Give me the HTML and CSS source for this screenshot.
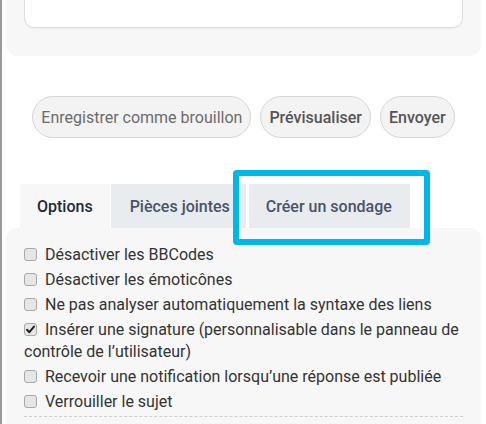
FILE: index.html
```html
<!DOCTYPE html>
<html lang="fr">
<head>
<meta charset="utf-8">
<link rel="stylesheet" href="styles.css">
</head>
<body>
<div class="page">
  <div class="editor-panel">
    <textarea class="message"></textarea>
  </div>

  <div class="actions">
    <button class="btn">Enregistrer comme brouillon</button>
    <button class="btn btn-strong">Prévisualiser</button>
    <button class="btn btn-strong">Envoyer</button>
  </div>

  <div class="tabs">
    <div class="tab tab-active">Options</div>
    <div class="tab">Pièces jointes</div>
    <div class="tab tab-poll">Créer un sondage
      <span class="highlight"></span>
    </div>
  </div>

  <div class="options-panel">
    <label class="opt"><span class="box"></span>Désactiver les BBCodes</label>
    <label class="opt"><span class="box"></span>Désactiver les émoticônes</label>
    <label class="opt"><span class="box"></span>Ne pas analyser automatiquement la syntaxe des liens</label>
    <label class="opt"><span class="box box-checked"><svg viewBox="0 0 13 13" width="13" height="13"><path d="M3 6.8 L5.4 9.2 L10 3.6" fill="none" stroke="#222" stroke-width="2" stroke-linecap="round" stroke-linejoin="round"/></svg></span>Insérer une signature (personnalisable dans le panneau de contrôle de l’utilisateur)</label>
    <label class="opt"><span class="box"></span>Recevoir une notification lorsqu’une réponse est publiée</label>
    <label class="opt"><span class="box"></span>Verrouiller le sujet</label>
    <div class="divider"></div>
  </div>
</div>
</body>
</html>
```

FILE: styles.css
```css
html, body {
  margin: 0;
  padding: 0;
  background: #ffffff;
  overflow: hidden;
}

body {
  font-family: Roboto, "Liberation Sans", Arial, sans-serif;
  color: #333;
}

.page {
  border-left: 2px solid #9a9a9a;
  min-height: 424px;
  padding-left: 4px;
  padding-right: 5px;
}

.editor-panel {
  background: #f7f7f7;
  border-radius: 0 0 11px 11px;
  padding: 0 18px 28px 18px;
  margin-top: -20px;
}

.message {
  display: block;
  box-sizing: border-box;
  width: 100%;
  height: 48px;
  background: #fff;
  border: 1px solid #dedede;
  border-radius: 10px;
  box-shadow: 0 1px 1px rgba(0,0,0,0.04);
  resize: none;
  outline: none;
}

.actions {
  display: flex;
  justify-content: center;
  gap: 9px;
  margin-top: 40px;
}

.btn {
  height: 42px;
  padding: 0 8px;
  font-family: Roboto, "Liberation Sans", Arial, sans-serif;
  font-size: 16px;
  color: #6b6b6b;
  background: #f3f3f3;
  border: 1px solid #d6d6d6;
  border-radius: 21px;
}

.btn-strong {
  font-weight: 500;
  color: #555;
}

.tabs {
  display: flex;
  margin-top: 46px;
  margin-left: 14px;
  height: 44px;
}

.tab {
  display: flex;
  align-items: center;
  padding: 0 16px 0 19px;
  font-size: 16px;
  font-weight: 500;
  color: #47536a;
  background: #e9ecee;
  margin-right: 3px;
}

.tab-active {
  background: #f7f7f7;
  color: #1b2a3a;
  font-weight: 500;
  padding: 0 17px 0 17px;
  margin-right: 1px;
}

.tab-poll {
  position: relative;
  padding: 0 18px 0 17px;
}

.highlight {
  position: absolute;
  left: -16px;
  top: -14px;
  right: -20px;
  height: 75px;
  box-sizing: border-box;
  border: 6px solid #00b7ea;
  border-radius: 4px;
  pointer-events: none;
}

.options-panel {
  background: #f7f7f7;
  border-radius: 11px;
  padding: 16px 18px 20px 18px;
}

.opt {
  display: block;
  font-size: 16px;
  line-height: 22px;
  margin-bottom: 3px;
  color: #333;
}

.box {
  display: inline-block;
  box-sizing: border-box;
  width: 13px;
  height: 13px;
  margin: 0 8px 0 0;
  vertical-align: -1px;
  background: #e6e6e6;
  border: 1px solid #a8a8a8;
  border-radius: 3px;
  position: relative;
}

.box svg {
  position: absolute;
  left: -1px;
  top: -1px;
}

.divider {
  border-top: 1px dashed #cfcfcf;
  margin-top: 2px;
}
```
